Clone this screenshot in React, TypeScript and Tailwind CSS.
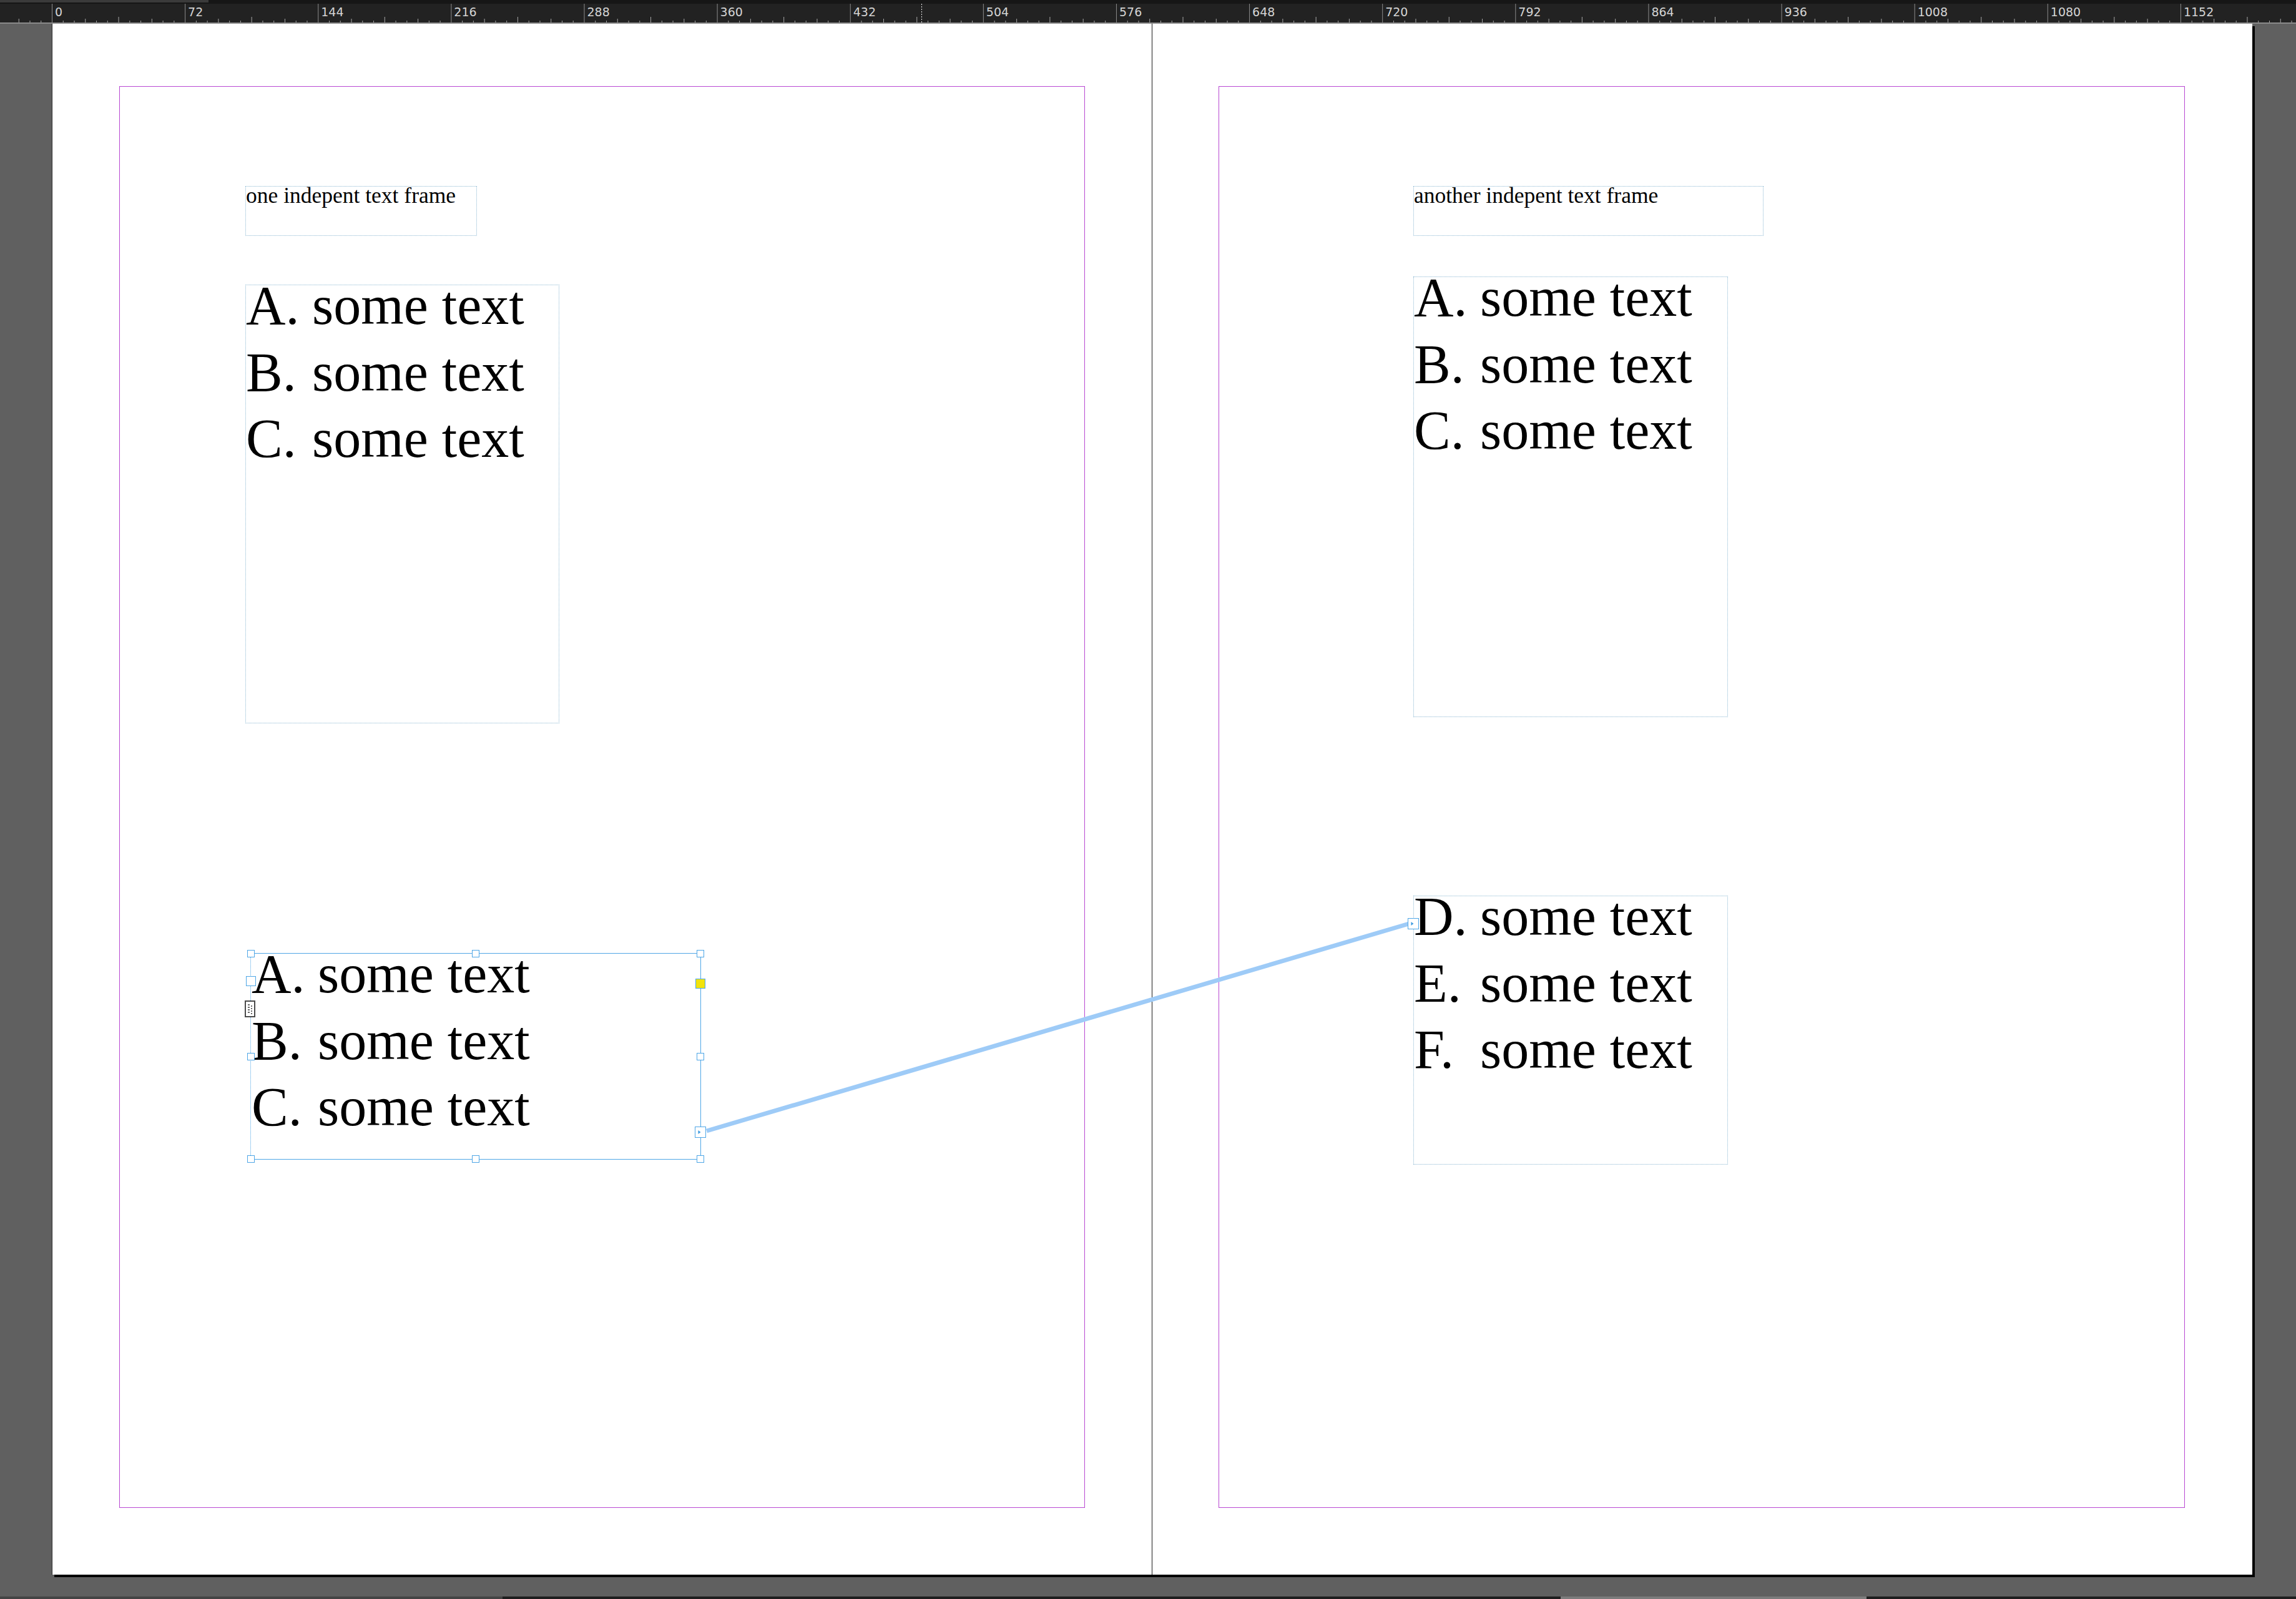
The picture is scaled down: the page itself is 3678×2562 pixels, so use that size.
const PT = 2.96;
const ORIGIN = 83;

function Ruler() {
  const ticks = [];
  for (let i = -3; i * 6 <= 1260; i++) {
    const pt = i * 6;
    const x = ORIGIN + pt * PT + 0.5;
    let h = 3;
    if (pt % 72 === 0) h = 30;
    else if (pt % 36 === 0) h = 9;
    else if (pt % 18 === 0) h = 6;
    ticks.push(<line key={i} x1={x} x2={x} y1={30 - h} y2={30} stroke={h === 30 ? "#8d8d8d" : "#a8a8a8"} strokeWidth={1} />);
  }
  const labels = [];
  for (let k = 0; k <= 16; k++) {
    labels.push(
      <text key={k} x={ORIGIN + k * 72 * PT + 5} y={20} fill="#d4d4d4" fontSize={19} fontFamily="'DejaVu Sans', sans-serif">
        {k * 72}
      </text>
    );
  }
  return (
    <div className="h-[30px] w-full shrink-0 bg-[#222222]">
      <svg width={3678} height={30} className="block">
        {ticks}
        {labels}
        <line x1={1476.5} x2={1476.5} y1={0} y2={30} stroke="#e8e8e8" strokeWidth={1} strokeDasharray="2 2" />
      </svg>
    </div>
  );
}

function ListText({ items }: { items: [string, string][] }) {
  return (
    <div className="-mt-[20px] whitespace-nowrap font-['Liberation_Serif',serif] text-[88px] leading-[106.6px] text-black">
      {items.map(([marker, text]) => (
        <div key={marker} className="flex">
          <span className="w-[106px] shrink-0">{marker}</span>
          <span>{text}</span>
        </div>
      ))}
    </div>
  );
}

function SmallText({ children }: { children: string }) {
  return (
    <div className="-mt-[7px] whitespace-nowrap font-['Liberation_Serif',serif] text-[35.5px] leading-[42.6px] text-black">
      {children}
    </div>
  );
}

function PortArrow() {
  return (
    <svg viewBox="0 0 18 18" className="h-full w-full">
      <path d="M5 5.5 L9.5 9 L5 12.5 Z" fill="#3d9be0" />
    </svg>
  );
}

const handle = "absolute z-20 h-[12px] w-[12px] -translate-x-1/2 -translate-y-1/2 border-[1.5px] border-[#4ea6e6] bg-white";

function SelectedFrame() {
  return (
    <div className="absolute left-[318px] top-[1489px] h-[331px] w-[721px] border-y-[1.5px] border-r-[1.5px] border-[#4ea6e6]">
      <div className="absolute -left-px top-0 bottom-0 border-l border-dotted border-[#4ea6e6]" />
      <div className="ml-[1px]">
        <ListText items={[["A.", "some text"], ["B.", "some text"], ["C.", "some text"]]} />
      </div>
      <div className={`${handle} left-0 top-0`} />
      <div className={`${handle} left-1/2 top-0`} />
      <div className={`${handle} left-full top-0`} />
      <div className={`${handle} left-0 top-1/2`} />
      <div className={`${handle} left-full top-1/2`} />
      <div className={`${handle} left-0 top-full`} />
      <div className={`${handle} left-1/2 top-full`} />
      <div className={`${handle} left-full top-full`} />
      {/* in port */}
      <div className="absolute z-20 left-0 top-[44px] h-[16px] w-[16px] -translate-x-1/2 -translate-y-1/2 border-[1.5px] border-[#4ea6e6] bg-white" />
      {/* corner options */}
      <div className="absolute z-20 left-full top-[48px] h-[16px] w-[16px] -translate-x-1/2 -translate-y-1/2 border-[1.5px] border-[#4ea6e6] bg-[#f2e30c]" />
      {/* out port */}
      <div className="absolute z-20 left-full top-[286px] h-[18px] w-[18px] -translate-x-1/2 -translate-y-1/2 border-[1.5px] border-[#4ea6e6] bg-white">
        <PortArrow />
      </div>
      {/* content indicator */}
      <svg viewBox="0 0 17 27" className="absolute z-20 -left-[10px] top-[75px] h-[27px] w-[17px]">
        <rect x={1} y={1} width={15} height={25} fill="#fff" stroke="#4a4a4a" strokeWidth={2} />
        <path d="M5 7h3M5 11h3M5 15h3M5 19h3M10 9h2M10 13h2M10 17h2M10 21h2" stroke="#3a3a3a" strokeWidth={1.5} />
      </svg>
    </div>
  );
}

export default function App() {
  return (
    <div className="flex h-[2562px] w-[3678px] flex-col overflow-hidden bg-[#606060]">
      <div className="h-[6px] shrink-0 bg-[#161616]">
        <div className="h-[4px] w-[334px] bg-[#3a3a3a]" />
      </div>
      <Ruler />
      <div className="h-[2px] shrink-0 bg-[#8a8a8a]" />

      <div className="flex-1 pl-[83px]">
        <div className="relative flex w-max border-l border-[#2a2a2a] shadow-[4px_4px_0_#000]">
          {/* left page */}
          <div className="relative h-[2485px] w-[1762px] border-r border-[#1a1a1a] bg-white">
            <div className="absolute left-[107px] right-[107px] top-[100px] bottom-[107px] border-[1.5px] border-[#b847d2]" />
            <div className="absolute left-[309px] top-[260px] h-[80px] w-[371px] border border-dotted border-[#8cb8d2]">
              <SmallText>one indepent text frame</SmallText>
            </div>
            <div className="absolute left-[309px] top-[418px] h-[703px] w-[503px] border border-dotted border-[#8cb8d2]">
              <ListText items={[["A.", "some text"], ["B.", "some text"], ["C.", "some text"]]} />
            </div>
            <SelectedFrame />
          </div>

          {/* right page */}
          <div className="relative h-[2485px] w-[1762px] bg-white">
            <div className="absolute left-[106px] right-[108px] top-[100px] bottom-[107px] border-[1.5px] border-[#b847d2]" />
            <div className="absolute left-[418px] top-[260px] h-[80px] w-[561px] border border-dotted border-[#8cb8d2]">
              <SmallText>another indepent text frame</SmallText>
            </div>
            <div className="absolute left-[418px] top-[405px] h-[706px] w-[504px] border border-dotted border-[#8cb8d2]">
              <ListText items={[["A.", "some text"], ["B.", "some text"], ["C.", "some text"]]} />
            </div>
            <div className="absolute left-[418px] top-[1397px] h-[431px] w-[504px] border border-dotted border-[#8cb8d2]">
              <ListText items={[["D.", "some text"], ["E.", "some text"], ["F.", "some text"]]} />
              <div className="absolute z-20 -left-[10px] top-[35px] h-[18px] w-[18px] border-[1.5px] border-[#4ea6e6] bg-white">
                <PortArrow />
              </div>
            </div>
          </div>

          {/* text thread between the linked frames */}
          <svg className="pointer-events-none absolute left-0 top-0 z-10 h-[2485px] w-[3524px]" width={3524} height={2485}>
            <line x1={1048} y1={1774} x2={2173} y2={1442} stroke="#9ecbf7" strokeWidth={7} />
          </svg>
        </div>
      </div>

      <div className="flex h-[4px] shrink-0 bg-[#1e1e1e]">
        <div className="w-[805px] bg-[#444444]" />
        <div className="w-[1695px]" />
        <div className="w-[490px] bg-[#7c7c7c]" />
      </div>
    </div>
  );
}
